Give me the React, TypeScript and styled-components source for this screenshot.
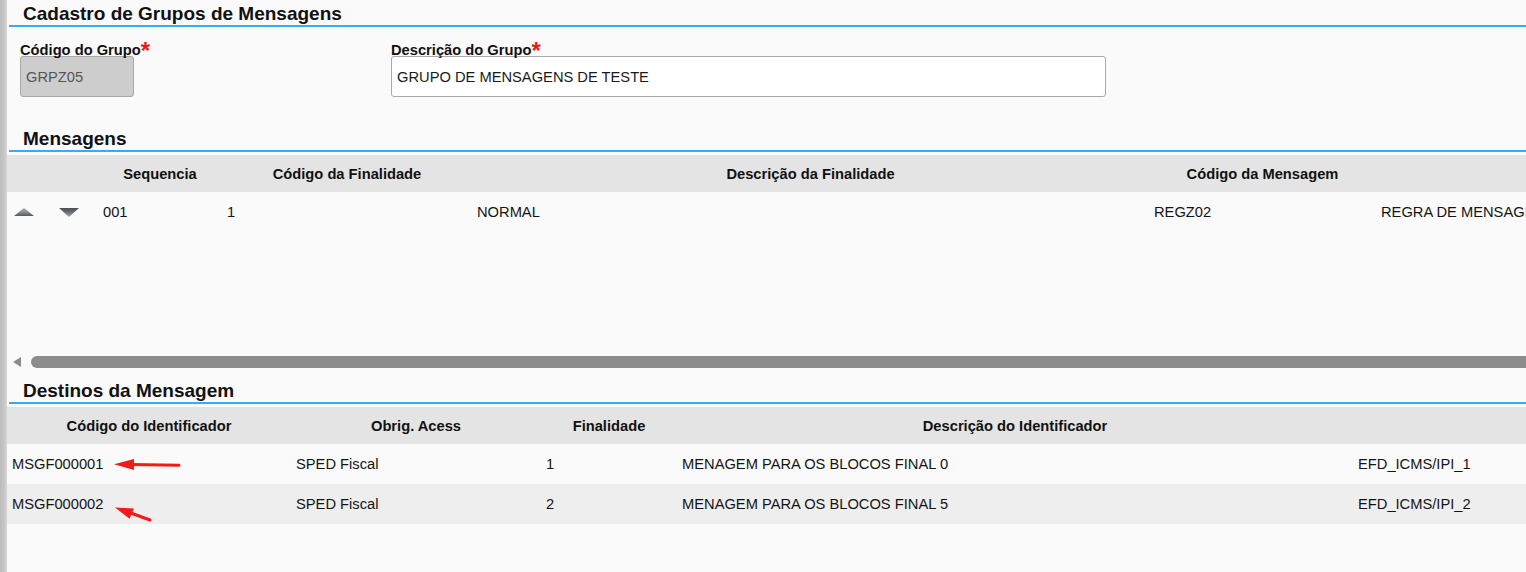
import React from "react";
import styled, { createGlobalStyle } from "styled-components";

const GlobalStyle = createGlobalStyle`
  html, body {
    margin: 0;
    padding: 0;
    background: #fafafa;
    overflow: hidden;
    font-family: "Liberation Sans", Arial, sans-serif;
  }
  * { box-sizing: border-box; }
`;

const Page = styled.div`
  position: relative;
  display: flex;
  width: 1526px;
  height: 572px;
  background: #fafafa;
  overflow: hidden;
`;

const LeftStrip = styled.div`
  width: 7px;
  flex-shrink: 0;
  background: linear-gradient(to right, #bcbcbc, #c9c9c9 70%, #d8d8d8);
`;

const Content = styled.div`
  flex: 1;
  min-width: 0;
  overflow: hidden;
  display: flex;
  flex-direction: column;
`;

const SectionTitle = styled.h2<{ $mt: number }>`
  margin: ${(p) => p.$mt}px 0 0 2px;
  padding: 2px 0 0 14px;
  height: 27px;
  line-height: 23px;
  font-size: 19px;
  font-weight: 700;
  color: #111;
  border-bottom: 2px solid #40a8f0;
  white-space: nowrap;
`;

const FormRow = styled.div`
  display: grid;
  grid-template-columns: 371px 715px;
  padding-left: 13px;
  margin-top: 12px;
`;

const Field = styled.div`
  display: flex;
  flex-direction: column;
`;

const Label = styled.label`
  position: relative;
  z-index: 1;
  font-size: 14.7px;
  font-weight: 700;
  line-height: 16px;
  height: 17px;
  color: #111;
  white-space: nowrap;
`;

const Required = styled.span`
  position: relative;
  top: 4px;
  font-size: 24px;
  line-height: 16px;
  color: #e41b1b;
`;

const TextInput = styled.input<{ $w: number; $disabled?: boolean }>`
  width: ${(p) => p.$w}px;
  height: 41px;
  border: 1px solid #a9a9a9;
  border-radius: 3px;
  padding: 0 5px;
  font-family: "Liberation Sans", Arial, sans-serif;
  font-size: 14.7px;
  background: ${(p) => (p.$disabled ? "#cdcdcd" : "#ffffff")};
  color: ${(p) => (p.$disabled ? "#555555" : "#1a1a1a")};
  outline: none;
`;

const TableWrap = styled.div<{ $h?: number }>`
  margin-top: 3px;
  ${(p) => (p.$h ? `height: ${p.$h}px;` : "")}
  overflow: hidden;
`;

const HeadRow = styled.div<{ $cols: string }>`
  display: grid;
  grid-template-columns: ${(p) => p.$cols};
  width: max-content;
  height: 37px;
  background: #e4e4e4;
`;

const HeadCell = styled.div`
  display: flex;
  align-items: center;
  justify-content: center;
  font-size: 14.7px;
  font-weight: 700;
  color: #111;
  white-space: nowrap;
`;

const BodyRow = styled.div<{ $cols: string; $alt?: boolean }>`
  display: grid;
  grid-template-columns: ${(p) => p.$cols};
  width: max-content;
  height: 40px;
  background: ${(p) => (p.$alt ? "#eeeeee" : "#fafafa")};
`;

const Cell = styled.div`
  display: flex;
  align-items: center;
  padding-left: 5px;
  font-size: 14.7px;
  color: #141414;
  white-space: nowrap;
  overflow: visible;
`;

const IconCell = styled.div`
  display: flex;
  align-items: center;
  padding-left: 7px;
`;

const ScrollBar = styled.div`
  display: flex;
  align-items: center;
  gap: 10px;
  height: 12px;
  margin-top: 4px;
  padding-left: 6px;
`;

const ScrollThumb = styled.div`
  flex: 1;
  height: 12px;
  border-radius: 6px 0 0 6px;
  background: #8c8c8c;
`;

const Overlay = styled.svg`
  position: absolute;
  left: 0;
  top: 0;
  pointer-events: none;
`;

const UpArrow = () => (
  <svg width="20" height="10" viewBox="0 0 20 10">
    <defs>
      <linearGradient id="upg" x1="0" y1="0" x2="0" y2="1">
        <stop offset="0" stopColor="#a9aeb2" />
        <stop offset="0.6" stopColor="#80868b" />
        <stop offset="1" stopColor="#53585d" />
      </linearGradient>
    </defs>
    <polygon points="0,9 10,1 20,9" fill="url(#upg)" />
  </svg>
);

const DownArrow = () => (
  <svg width="20" height="11" viewBox="0 0 20 11">
    <defs>
      <linearGradient id="downg" x1="0" y1="0" x2="0" y2="1">
        <stop offset="0" stopColor="#4a4f54" />
        <stop offset="0.35" stopColor="#5f6469" />
        <stop offset="1" stopColor="#a4a9ad" />
      </linearGradient>
    </defs>
    <polygon points="0,1 20,1 10,10" fill="url(#downg)" />
  </svg>
);

const msgCols = "45px 46px 124px 250px 677px 227px 400px";
const destCols = "284px 250px 136px 676px 300px";

const destinos = [
  { cod: "MSGF000001", obrig: "SPED Fiscal", fin: "1", desc: "MENAGEM PARA OS BLOCOS FINAL 0", id: "EFD_ICMS/IPI_1" },
  { cod: "MSGF000002", obrig: "SPED Fiscal", fin: "2", desc: "MENAGEM PARA OS BLOCOS FINAL 5", id: "EFD_ICMS/IPI_2" },
];

export default function App() {
  return (
    <>
      <GlobalStyle />
      <Page>
        <LeftStrip />
        <Content>
          <SectionTitle $mt={0}>Cadastro de Grupos de Mensagens</SectionTitle>
          <FormRow>
            <Field>
              <Label>
                Código do Grupo<Required>*</Required>
              </Label>
              <TextInput $w={114} $disabled readOnly value="GRPZ05" />
            </Field>
            <Field>
              <Label>
                Descrição do Grupo<Required>*</Required>
              </Label>
              <TextInput $w={715} readOnly value="GRUPO DE MENSAGENS DE TESTE" />
            </Field>
          </FormRow>

          <SectionTitle $mt={28}>Mensagens</SectionTitle>
          <TableWrap $h={197}>
            <HeadRow $cols={msgCols}>
              <HeadCell />
              <HeadCell />
              <HeadCell>Sequencia</HeadCell>
              <HeadCell>Código da Finalidade</HeadCell>
              <HeadCell>Descrição da Finalidade</HeadCell>
              <HeadCell>Código da Mensagem</HeadCell>
              <HeadCell />
            </HeadRow>
            <BodyRow $cols={msgCols}>
              <IconCell>
                <UpArrow />
              </IconCell>
              <IconCell>
                <DownArrow />
              </IconCell>
              <Cell>001</Cell>
              <Cell>1</Cell>
              <Cell>NORMAL</Cell>
              <Cell>REGZ02</Cell>
              <Cell>REGRA DE MENSAGEM DE TESTE</Cell>
            </BodyRow>
          </TableWrap>
          <ScrollBar>
            <svg width="8" height="10" viewBox="0 0 8 10">
              <polygon points="0,5 8,0 8,10" fill="#8c8c8c" />
            </svg>
            <ScrollThumb />
          </ScrollBar>

          <SectionTitle $mt={9}>Destinos da Mensagem</SectionTitle>
          <TableWrap>
            <HeadRow $cols={destCols}>
              <HeadCell>Código do Identificador</HeadCell>
              <HeadCell>Obrig. Acess</HeadCell>
              <HeadCell>Finalidade</HeadCell>
              <HeadCell>Descrição do Identificador</HeadCell>
              <HeadCell />
            </HeadRow>
            {destinos.map((d, i) => (
              <BodyRow key={d.cod} $cols={destCols} $alt={i % 2 === 1}>
                <Cell>{d.cod}</Cell>
                <Cell>{d.obrig}</Cell>
                <Cell>{d.fin}</Cell>
                <Cell>{d.desc}</Cell>
                <Cell>{d.id}</Cell>
              </BodyRow>
            ))}
          </TableWrap>
        </Content>

        <Overlay width="1526" height="572" viewBox="0 0 1526 572">
          <line x1="131" y1="464.5" x2="179" y2="465.2" stroke="#f21a1a" strokeWidth="3" strokeLinecap="round" />
          <polygon points="114,464.3 134,459 134,470" fill="#f21a1a" />
          <line x1="128" y1="512" x2="150" y2="520" stroke="#f21a1a" strokeWidth="3" strokeLinecap="round" />
          <polygon points="115,507.5 134,508.5 129.5,518.8" fill="#f21a1a" />
        </Overlay>
      </Page>
    </>
  );
}
